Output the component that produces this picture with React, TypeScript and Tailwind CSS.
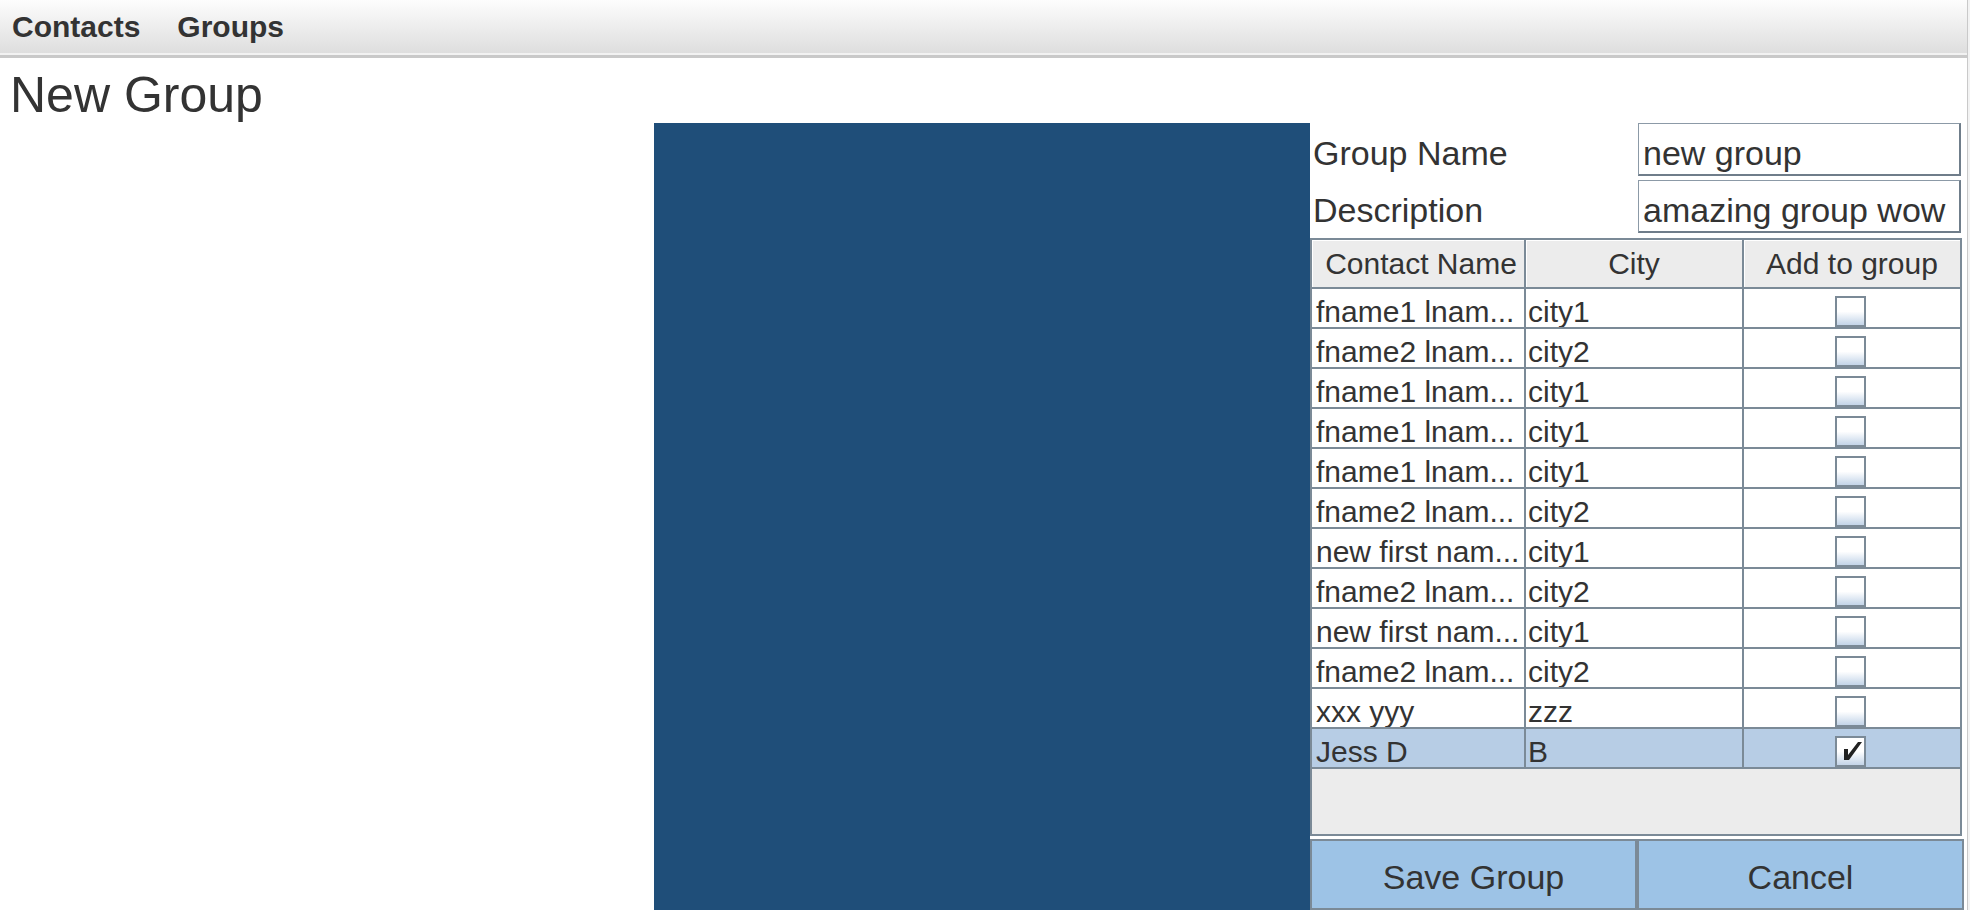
import React from 'react';

const contacts = [
  { name: 'fname1 lnam...', city: 'city1' },
  { name: 'fname2 lnam...', city: 'city2' },
  { name: 'fname1 lnam...', city: 'city1' },
  { name: 'fname1 lnam...', city: 'city1' },
  { name: 'fname1 lnam...', city: 'city1' },
  { name: 'fname2 lnam...', city: 'city2' },
  { name: 'new first nam...', city: 'city1' },
  { name: 'fname2 lnam...', city: 'city2' },
  { name: 'new first nam...', city: 'city1' },
  { name: 'fname2 lnam...', city: 'city2' },
  { name: 'xxx yyy', city: 'zzz' },
  { name: 'Jess D', city: 'B', checked: true }
];

function Checkbox({ checked }: { checked?: boolean }) {
  return (
    <div className="flex h-[31px] w-[31px] items-center justify-center border-2 border-[#7b8a97] bg-gradient-to-b from-white via-white to-[#c3d4e8]">
      {checked && (
        <svg width="27" height="27" viewBox="0 0 27 27">
          <polygon points="7,11 11,11 11,17 21,4 25,4 12,22 7,22" fill="#222" />
        </svg>
      )}
    </div>
  );
}

function FormRow({ label, value }: { label: string; value: string }) {
  return (
    <div className="flex h-[53px] shrink-0">
      <div className="w-[328px] pl-[3px] pt-[8px] text-[34px] leading-[45px]">{label}</div>
      <div className="w-[323px] overflow-hidden whitespace-nowrap border-t border-l border-r-2 border-b-2 border-t-[#8c9aa7] border-l-[#8c9aa7] border-r-[#6f7d8a] border-b-[#6f7d8a] bg-white pl-[4px] pt-[8px] text-[34px] leading-[42px]">
        {value}
      </div>
    </div>
  );
}

function ContactsTable() {
  return (
    <div className="flex h-[598px] w-[652px] shrink-0 flex-col border-2 border-[#7b8a97] bg-[#ececec] text-[30px]">
      <div className="grid h-[49px] shrink-0 grid-cols-[214px_218px_216px] border-b-2 border-[#7b8a97]">
        <div className="flex items-center justify-center border-r-2 border-[#7b8a97] pl-[6px] shadow-[inset_1px_1px_0_#ffffff]">
          Contact Name
        </div>
        <div className="flex items-center justify-center border-r-2 border-[#7b8a97] shadow-[inset_1px_1px_0_#ffffff]">
          City
        </div>
        <div className="flex items-center justify-center shadow-[inset_1px_1px_0_#ffffff]">
          Add to group
        </div>
      </div>
      {contacts.map((c, i) => (
        <div
          key={i}
          className={`grid h-[40px] shrink-0 grid-cols-[214px_218px_216px] overflow-hidden border-b-2 border-[#7b8a97] ${
            c.checked ? 'bg-[#b7cde5]' : 'bg-white'
          }`}
        >
          <div className="flex items-center overflow-hidden whitespace-nowrap border-r-2 border-[#7b8a97] pl-[4px]">
            {c.name}
          </div>
          <div className="flex items-center border-r-2 border-[#7b8a97] pl-[2px]">{c.city}</div>
          <div className="flex items-center justify-center pr-[4px]">
            <Checkbox checked={c.checked} />
          </div>
        </div>
      ))}
      <div className="flex-1" />
    </div>
  );
}

export default function App() {
  return (
    <div className="flex h-[910px] w-[1970px] overflow-hidden bg-white font-['Liberation_Sans',Arial,sans-serif] text-[#333333]">
      <div className="flex w-[1967px] flex-col">
        <div className="flex h-[53px] shrink-0 items-center gap-[37px] bg-gradient-to-b from-[#fdfdfd] to-[#dedede] pl-[12px] text-[30px] font-bold leading-[34px]">
          <span>Contacts</span>
          <span>Groups</span>
        </div>
        <div className="h-[2px] shrink-0 bg-[#f2f2f2]" />
        <div className="h-[3px] shrink-0 bg-[#c9c9c9]" />
        <div className="h-[65px] shrink-0 pl-[10px] pt-[7px] text-[50px] leading-[60px]">New Group</div>
        <div className="flex flex-1">
          <div className="w-[654px]" />
          <div className="w-[656px] bg-[#1f4e79]" />
          <div className="flex w-[654px] flex-col">
            <FormRow label="Group Name" value="new group" />
            <div className="h-[4px] shrink-0" />
            <FormRow label="Description" value="amazing group wow" />
            <div className="h-[5px] shrink-0" />
            <ContactsTable />
            <div className="h-[3px] shrink-0" />
            <div className="grid flex-1 grid-cols-[327px_327px] text-[34px]">
              <button className="flex items-center justify-center border-2 border-[#7b8a97] bg-[#9dc3e6] pt-[6px] text-[#333333]">
                Save Group
              </button>
              <button className="flex items-center justify-center border-2 border-[#7b8a97] bg-[#9dc3e6] pt-[6px] text-[#333333]">
                Cancel
              </button>
            </div>
          </div>
        </div>
      </div>
      <div className="w-px bg-[#c9c9c9]" />
      <div className="flex-1 bg-[#f3f3f3]" />
    </div>
  );
}
